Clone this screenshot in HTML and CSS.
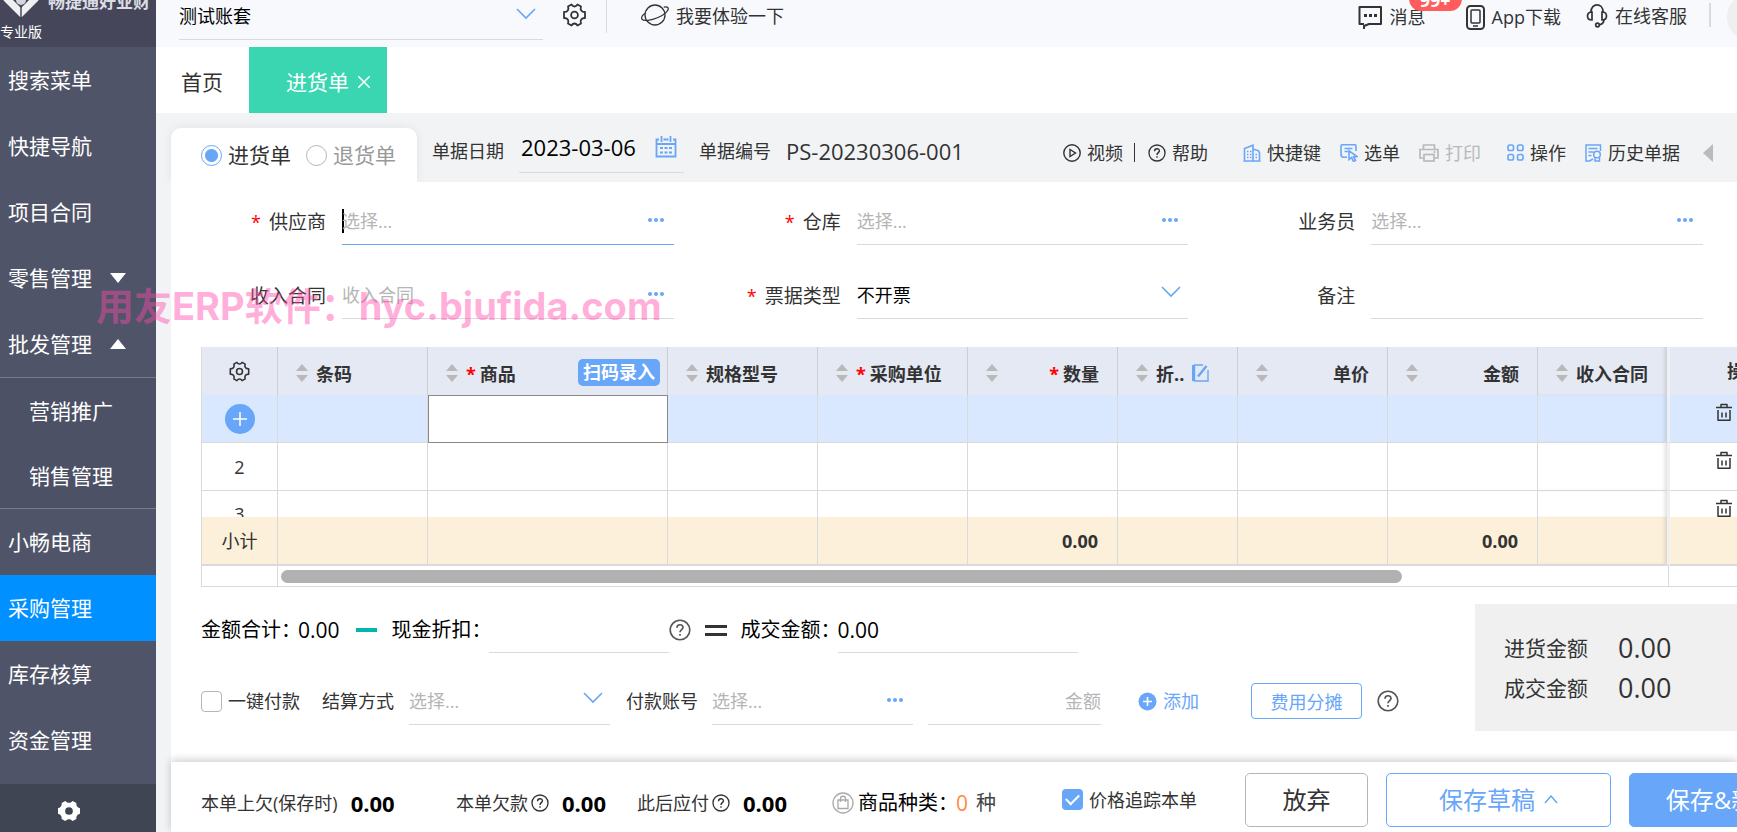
FILE: index.html
```html
<!DOCTYPE html>
<html lang="zh-CN">
<head>
<meta charset="utf-8">
<title>进货单</title>
<link rel="stylesheet" href="styles.css">
</head>
<body>
<svg class="sprite" aria-hidden="true">
  <symbol id="i-gear" viewBox="0 0 24 24"><g fill="none" stroke="currentColor" stroke-width="1.8" stroke-linejoin="round"><path d="M9 1.5c1 1.6 1.600 2 3 2s2-.4 3-2l3.500 2c-.7 1.800-.5 2.800.2 3.900s1.500 1.600 3.800 1.600v6c-2.300 0-3.100.5-3.800 1.600s-.9 2.100-.2 3.900l-3.500 2c-1-1.600-1.600-2-3-2s-2 .4-3 2l-3.500-2c.7-1.800.5-2.800-.2-3.900S3.800 15 1.500 15V9c2.300 0 3.100-.5 3.800-1.600s.9-2.100.2-3.900z"/><circle cx="12" cy="12" r="3.400"/></g></symbol>
  <symbol id="i-down" viewBox="0 0 20 12"><path d="M1 1l9 9 9-9" fill="none" stroke="currentColor" stroke-width="1.600"/></symbol>
  <symbol id="i-dots" viewBox="0 0 16 4"><g fill="currentColor"><circle cx="2" cy="2" r="2"/><circle cx="8" cy="2" r="2"/><circle cx="14" cy="2" r="2"/></g></symbol>
  <symbol id="i-help" viewBox="0 0 22 22"><circle cx="11" cy="11" r="9.800" fill="none" stroke="currentColor" stroke-width="1.600"/><path d="M8 8.800c0-4 6-4 6-.5 0 2.200-3 2.400-3 5M11 15v1.800" fill="none" stroke="currentColor" stroke-width="1.700"/></symbol>
  <symbol id="i-sort" viewBox="0 0 12 18"><path d="M0 7l6-7 6 7zM0 11h12l-6 7z" fill="#b9b9b9"/></symbol>
  <symbol id="i-trash" viewBox="0 0 16 18"><path d="M0 4.500h16M5 4V1.500h6V4M2 7v10.200h12V7M6 9.500v5M10 9.500v5" fill="none" stroke="currentColor" stroke-width="1.500" stroke-linejoin="round"/></symbol>
</svg>
<div class="app">
  <nav class="side">
    <div class="brand">
      <div class="brand-row">
        <svg class="brand-logo" viewBox="0 0 36 30"><path d="M3 11l15 15 15-15" fill="none" stroke="#f0f0f2" stroke-width="7"/><path d="M18 18v12" stroke="#45465a" stroke-width="1.500"/><circle cx="18" cy="13" r="5" fill="#d5d5da"/></svg>
        <span>畅捷通好业财</span>
      </div>
      <small>专业版</small>
    </div>
    <a href="#">搜索菜单</a>
    <a href="#">快捷导航</a>
    <a href="#">项目合同</a>
    <a href="#">零售管理<svg class="tri" viewBox="0 0 16 10"><path d="M0 0h16l-8 10z" fill="#fff"/></svg></a>
    <a href="#">批发管理<svg class="tri" viewBox="0 0 16 10"><path d="M0 10h16l-8-10z" fill="#fff"/></svg></a>
    <div class="sub"><a href="#">营销推广</a><a href="#">销售管理</a></div>
    <a href="#">小畅电商</a>
    <a href="#" class="on">采购管理</a>
    <a href="#">库存核算</a>
    <a href="#">资金管理</a>
    <button class="side-foot" aria-label="设置"><svg width="22" height="22" viewBox="0 0 24 24"><path fill="#fff" fill-rule="evenodd" d="M8 1c1.500 1.500 2.500 2 4 2s2.500-.5 4-2l4 2.300c-.3 3 .7 4.700 4 5.700v6c-3.300 1-4.300 2.700-4 5.700L16 23c-1.500-1.500-2.500-2-4-2s-2.500.5-4 2l-4-2.300c.3-3-.7-4.700-4-5.700V9c3.300-1 4.300-2.700 4-5.700zm4 6.800a4.200 4.200 0 100 8.400 4.200 4.200 0 000-8.400z"/></svg></button>
  </nav>

  <main class="main">
    <header class="top">
      <div class="field account">
        <select aria-label="账套"><option>测试账套</option></select>
        <svg class="chev" width="20" height="12"><use href="#i-down"/></svg>
      </div>
      <button class="plain top-gear" aria-label="设置"><svg width="25" height="24"><use href="#i-gear"/></svg></button>
      <i class="bar"></i>
      <a href="#" class="try"><svg width="28" height="24" viewBox="0 0 28 24" fill="none" stroke="currentColor" stroke-width="1.300"><circle cx="14" cy="11" r="10"/><path d="M4.500 9C1.500 11 0 13.500 1 15.200c1.500 2.300 9 1.300 16-1.700s11.500-7.500 10-9.700c-.6-.9-2.300-1-4.300-.6"/></svg>我要体验一下</a>
      <div class="top-right">
        <a href="#" class="msg"><svg width="25" height="25" viewBox="0 0 25 25" fill="none" stroke="currentColor" stroke-width="2"><path d="M6 24v-3l5-2h12V2H1.500v17H6" stroke-linejoin="round"/><path d="M6 10.500h3M11 10.500h3M16 10.500h3" stroke-width="3"/></svg>消息<b class="badge">99+</b></a>
        <a href="#" class="dl"><svg width="19" height="25" viewBox="0 0 19 25" fill="none" stroke="currentColor" stroke-width="2"><rect x="1" y="1" width="17" height="23" rx="3.500"/><rect x="5" y="5" width="9" height="13" rx="1" stroke-width="1.500"/><path d="M7 21h5" stroke-width="1.500"/></svg>App下载</a>
        <a href="#" class="svc"><svg width="22" height="24" viewBox="0 0 22 24" fill="none" stroke="currentColor" stroke-width="1.700"><path d="M5 8C5-1.500 17-1.500 17 8M18 15c0 3-2 5.500-5 6"/><path d="M6 8c-6 0-6 8 0 8zM16 8c6 0 6 8 0 8z"/><circle cx="11.500" cy="21" r="1.800"/></svg>在线客服</a>
        <i class="bar short"></i>
        <span class="avatar"></span>
      </div>
    </header>

    <div class="tabs">
      <a href="#" class="tab">首页</a>
      <a href="#" class="tab cur">进货单<svg width="12" height="12" viewBox="0 0 12 12"><path d="M0 0l12 12M12 0L0 12" stroke="#fff" stroke-width="1.500"/></svg></a>
    </div>

    <div class="body">
      <div class="head">
        <div class="kind">
          <label><input type="radio" name="kind" checked>进货单</label>
          <label class="off"><input type="radio" name="kind">退货单</label>
        </div>
        <div class="docinfo">
          <label for="date">单据日期</label>
          <div class="field date">
            <input id="date" value="2023-03-06">
            <svg width="22" height="22" viewBox="0 0 22 22" fill="none" stroke="currentColor"><path d="M4 3.500H1.500v17h19v-17H18M8.500 3.500h5M1 8h20" stroke-width="1.800"/><path d="M6.500 0v6M15.500 0v6" stroke-width="1.800"/><path d="M5 12h3M9.500 12h3M14 12h3M5 16.500h3M9.500 16.500h3M14 16.500h3" stroke-width="1.800"/></svg>
          </div>
          <span class="no-label">单据编号</span>
          <span class="no">PS-20230306-001</span>
        </div>
        <div class="tools">
          <a href="#"><svg width="18" height="18" viewBox="0 0 18 18" fill="none" stroke="currentColor" stroke-width="1.400"><circle cx="9" cy="9" r="8.200"/><path d="M7 5.500v7L12.500 9z"/></svg>视频</a>
          <i class="vsep"></i>
          <a href="#"><svg width="18" height="18"><use href="#i-help"/></svg>帮助</a>
          <a href="#" class="wide"><svg class="blue" width="18" height="18" viewBox="0 0 18 18" fill="none" stroke="currentColor" stroke-width="1.600"><path d="M1.500 17V4.500L10 1.200V17M10 5l5.500 1.800L16.500 9v8M4 7.500h1.500M7 7.500h1.500M4 10.500h1.500M7 10.500h1.500M4 13.500h1.500M7 13.500h1.500M12.500 10.500H14M12.500 13.500H14M.5 17h17"/></svg>快捷键</a>
          <a href="#"><svg class="blue" width="18" height="18" viewBox="0 0 18 18" fill="none" stroke="currentColor" stroke-width="1.600"><path d="M16 7V2c0-.7-.4-1.200-1-1.200H2.200c-.7 0-1.200.5-1.200 1.200v8c0 2 1 3.200 2.500 3.200H7M4.500 4.500h8M4.500 7.500H8"/><path d="M9 6.800v8.700l2.500-2 2 4 2-1-2-3.500 3.500-.5z"/></svg>选单</a>
          <a href="#" class="dis"><svg width="20" height="18" viewBox="0 0 20 18" fill="none" stroke="currentColor" stroke-width="1.700"><path d="M4.500 5V1h11v4M4.500 14H1V5.500h18V14h-3.500"/><rect x="5" y="10.500" width="10" height="6.500"/><path d="M14.500 8h2"/></svg>打印</a>
          <a href="#" class="wide2"><svg class="blue" width="17" height="17" viewBox="0 0 17 17" fill="none" stroke="currentColor" stroke-width="1.600"><rect x="1" y="1" width="5.500" height="5.500" rx="1.800"/><rect x="10.500" y="1" width="5.500" height="5.500" rx="1.800"/><rect x="1" y="10.500" width="5.500" height="5.500" rx="1.800"/><rect x="10.500" y="10.500" width="5.500" height="5.500" rx="1.800"/></svg>操作</a>
          <a href="#"><svg class="blue" width="17" height="18" viewBox="0 0 17 18" fill="none" stroke="currentColor" stroke-width="1.500"><path d="M15.500 7V1H1v16h3.500L8 15M3.500 4.500h9M3.500 8h5M3.500 11.500h3"/><circle cx="12" cy="10.500" r="3.300"/><path d="M10 13.500V17h4.500v-3.500"/></svg>历史单据</a>
          <svg class="fold" width="10" height="18" viewBox="0 0 10 18"><path d="M10 0v18L0 9z" fill="#bbb"/></svg>
        </div>
      </div>

      <div class="card">
        <form class="form">
          <div class="item"><label for="f1"><em>*</em>供应商</label><div class="field focus"><span class="caret"></span><input id="f1" placeholder="选择..."><svg class="dots" width="16" height="4"><use href="#i-dots"/></svg></div></div>
          <div class="item"><label for="f2"><em>*</em>仓库</label><div class="field"><input id="f2" placeholder="选择..."><svg class="dots" width="16" height="4"><use href="#i-dots"/></svg></div></div>
          <div class="item"><label for="f3">业务员</label><div class="field"><input id="f3" placeholder="选择..."><svg class="dots" width="16" height="4"><use href="#i-dots"/></svg></div></div>
          <div class="item"><label for="f4">收入合同</label><div class="field"><input id="f4" placeholder="收入合同"><svg class="dots" width="16" height="4"><use href="#i-dots"/></svg></div></div>
          <div class="item"><label for="f5"><em>*</em>票据类型</label><div class="field"><select id="f5"><option>不开票</option></select><svg class="chev" width="20" height="12"><use href="#i-down"/></svg></div></div>
          <div class="item"><label for="f6">备注</label><div class="field"><input id="f6"></div></div>
        </form>

        <div class="grid">
          <table>
            <colgroup><col class="c-no"><col class="c-m"><col class="c-l"><col class="c-m"><col class="c-m"><col class="c-m"><col class="c-s"><col class="c-m"><col class="c-m"><col class="c-x"><col class="c-op"></colgroup>
            <thead><tr>
              <th class="mid"><svg class="dark" width="21" height="21"><use href="#i-gear"/></svg></th>
              <th><div><svg width="12" height="18"><use href="#i-sort"/></svg><span>条码</span></div></th>
              <th><div><svg width="12" height="18"><use href="#i-sort"/></svg><span><em>*</em>商品</span><button class="scan">扫码录入</button></div></th>
              <th><div><svg width="12" height="18"><use href="#i-sort"/></svg><span>规格型号</span></div></th>
              <th><div><svg width="12" height="18"><use href="#i-sort"/></svg><span><em>*</em>采购单位</span></div></th>
              <th><div><svg width="12" height="18"><use href="#i-sort"/></svg><span class="r"><em>*</em>数量</span></div></th>
              <th><div><svg width="12" height="18"><use href="#i-sort"/></svg><span>折..</span><svg class="blue" width="17" height="18" viewBox="0 0 17 18" fill="none" stroke="currentColor"><path d="M11 1H2.500v16H16V6" stroke-width="1.400"/><path d="M1 1v16" stroke-width="2"/><path d="M6 12.500L14.500 2" stroke-width="2.400"/></svg></div></th>
              <th><div><svg width="12" height="18"><use href="#i-sort"/></svg><span class="r">单价</span></div></th>
              <th><div><svg width="12" height="18"><use href="#i-sort"/></svg><span class="r">金额</span></div></th>
              <th><div><svg width="12" height="18"><use href="#i-sort"/></svg><span>收入合同</span></div></th>
              <th class="op mid">操作</th>
            </tr></thead>
            <tbody>
              <tr class="sel"><td class="mid"><button class="plus" aria-label="新增行"><svg width="14" height="14" viewBox="0 0 14 14"><path d="M7 0v14M0 7h14" stroke="#fff" stroke-width="1.500"/></svg></button></td><td></td><td class="edit"></td><td></td><td></td><td></td><td></td><td></td><td></td><td></td><td class="op"><svg class="dark" width="16" height="18"><use href="#i-trash"/></svg></td></tr>
              <tr><td class="mid">2</td><td></td><td></td><td></td><td></td><td></td><td></td><td></td><td></td><td></td><td class="op"><svg class="dark" width="16" height="18"><use href="#i-trash"/></svg></td></tr>
              <tr class="cut"><td class="mid"><div>3</div></td><td></td><td></td><td></td><td></td><td></td><td></td><td></td><td></td><td></td><td class="op"><svg class="dark" width="16" height="18"><use href="#i-trash"/></svg></td></tr>
            </tbody>
            <tfoot>
              <tr><td class="mid">小计</td><td></td><td></td><td></td><td></td><td class="num">0.00</td><td></td><td></td><td class="num">0.00</td><td></td><td class="op"></td></tr>
            </tfoot>
          </table>
          <div class="scroll"><span></span><div class="track"><i></i></div><span class="end"></span></div>
        </div>

        <div class="summary">
          <div class="lines">
            <div class="line big">
              <span>金额合计：</span><span class="val">0.00</span><i class="minus"></i><label for="disc">现金折扣：</label>
              <div class="field f-disc"><input id="disc"></div>
              <svg class="gray" width="22" height="22"><use href="#i-help"/></svg><i class="equal"></i>
              <label for="deal">成交金额：</label><div class="field f-deal"><input id="deal" value="0.00"></div>
            </div>
            <div class="line">
              <label class="ck"><input type="checkbox">一键付款</label>
              <label class="l-way" for="way">结算方式</label><div class="field f-way"><select id="way" class="ph"><option>选择...</option></select><svg class="chev" width="20" height="12"><use href="#i-down"/></svg></div>
              <label class="l-acc" for="acc">付款账号</label><div class="field f-acc"><input id="acc" placeholder="选择..."><svg class="dots" width="16" height="4"><use href="#i-dots"/></svg></div>
              <div class="field f-amt"><input aria-label="金额" placeholder="金额"></div>
              <a href="#" class="add"><svg width="19" height="19" viewBox="0 0 19 19"><circle cx="9.500" cy="9.500" r="9" fill="#67a6f8"/><path d="M9.500 5v9M5 9.500h9" stroke="#fff" stroke-width="1.600"/></svg>添加</a>
              <button class="share">费用分摊</button>
              <svg class="gray" width="22" height="22"><use href="#i-help"/></svg>
            </div>
          </div>
          <dl class="panel">
            <div><dt>进货金额</dt><dd>0.00</dd></div>
            <div><dt>成交金额</dt><dd>0.00</dd></div>
          </dl>
        </div>

        <footer class="foot">
          <span class="st s1">本单上欠(保存时)<b>0.00</b></span>
          <span class="st s2">本单欠款<svg width="18" height="18"><use href="#i-help"/></svg><b>0.00</b></span>
          <span class="st s3">此后应付<svg width="18" height="18"><use href="#i-help"/></svg><b>0.00</b></span>
          <span class="kinds"><svg width="22" height="22" viewBox="0 0 22 22" fill="none" stroke="#aaa" stroke-width="1.300"><circle cx="11" cy="11" r="10"/><path d="M6 8h10v8.500H6zM8.500 10V6.500c0-3 5-3 5 0V10"/></svg>商品种类：<strong>0</strong><span>种</span></span>
          <label class="ck trace"><input type="checkbox" checked>价格追踪本单</label>
          <button class="btn giveup">放弃</button>
          <button class="btn draft">保存草稿<svg width="14" height="9" viewBox="0 0 14 9"><path d="M1 8l6-7 6 7" fill="none" stroke="currentColor" stroke-width="1.500"/></svg></button>
          <button class="btn save">保存&amp;新增</button>
        </footer>
      </div>
    </div>
  </main>
  <div class="mark">用友ERP软件：hyc.bjufida.com</div>
</div>
</body>
</html>
```

FILE: styles.css
```css
* { box-sizing: border-box; }
body { margin: 0; overflow: hidden; background: #f2f3f5; color: #333; font: 18px/24px "Open Sans", "Noto Sans CJK SC", sans-serif; }
a { color: inherit; text-decoration: none; }
svg { flex: none; display: block; }
button, input, select { font: inherit; color: inherit; }
button { cursor: pointer; white-space: nowrap; }
em { color: #f00; font-style: normal; }
label { white-space: nowrap; }
.sprite { position: absolute; width: 0; height: 0; }
.app { display: flex; height: 100vh; position: relative; overflow: hidden; }
.blue { color: #67a6f8; }
.dark { color: #333; }
.gray { color: #555; }

.side { flex: 0 0 156px; display: flex; flex-direction: column; background: #505468; color: #fff; font-size: 21px; }
.side a { display: flex; align-items: center; height: 66px; padding-left: 8px; flex: none; }
.brand { flex: none; height: 47px; background: #45465a; overflow: hidden; }
.brand-row { display: flex; align-items: center; gap: 9px; height: 24px; margin: -10px 0 8px 3px; font-size: 17px; font-weight: bold; color: #dcdce2; white-space: nowrap; }
.brand-logo { width: 36px; height: 30px; }
.brand small { display: block; font-size: 14px; line-height: 20px; }
.tri { width: 16px; height: 10px; margin-left: 18px; }
.sub { border: solid #777a8a; border-width: 1px 0; background: #4d5165; flex: none; }
.side .sub a { height: 65px; padding-left: 29px; }
.side a.on { background: #0090ff; }
.side-foot { margin-top: auto; height: 48px; flex: none; border: 0; background: #404553; display: flex; align-items: center; justify-content: center; padding: 6px 18px 0 0; }

.main { flex: 1; min-width: 0; display: flex; flex-direction: column; }
.field { display: flex; align-items: center; border-bottom: 1px solid #d9dadc; height: 48px; min-width: 0; }
.field input, .field select { flex: 1; min-width: 0; width: 100%; border: 0; padding: 0; background: none; outline: 0; appearance: none; height: 28px; }
.field select { color: #000; margin-right: -20px; }
.field select.ph { color: #b5b5b5; }
.field input::placeholder { color: #b5b5b5; opacity: 1; }
.chev { color: #67a6f8; pointer-events: none; margin: 0 7px 6px 0; }
.dots { color: #67a6f8; margin: 0 10px 2px 0; }
.plain { border: 0; background: none; padding: 0; }

.top { height: 47px; flex: none; background: #f7f9fd; display: flex; align-items: flex-start; padding-left: 23px; }
.account { width: 364px; height: 40px; padding-bottom: 7px; }
.account .chev { margin-bottom: 4px; }
.top-gear { margin: 3px 19px 0 19px; }
.bar { width: 1px; height: 33px; background: #d9dadc; }
.try { display: flex; align-items: center; gap: 7px; margin: 2px 0 0 34px; height: 28px; }
.top-right { margin-left: auto; display: flex; align-items: center; height: 34px; }
.top-right a { display: flex; align-items: center; gap: 7px; white-space: nowrap; }
.msg { position: relative; }
.badge { position: absolute; left: 51px; top: -18px; width: 53px; height: 24px; border-radius: 12px; background: #ff5d5d; color: #fff; text-align: center; font-size: 18px; line-height: 26px; }
.dl { margin-left: 40px; }
.svc { margin-left: 25px; }
.top-right .svc { padding-bottom: 2px; }
.bar.short { height: 24px; width: 2px; margin: 0 16px 4px 22px; }
.avatar { width: 48px; height: 48px; border-radius: 50%; background: #efefef; margin-right: -38px; }

.tabs { height: 66px; flex: none; background: #fff; display: flex; font-size: 21px; }
.tab { display: flex; align-items: center; padding: 4px 26px 0 25px; }
.tab.cur { background: #3ad6b2; color: #fff; gap: 9px; padding: 4px 17px 0 37px; }

.body { flex: 1; display: flex; flex-direction: column; padding: 15px 0 0 15px; min-height: 0; }
.head { height: 54px; flex: none; display: flex; align-items: center; }
.kind { display: flex; align-items: center; gap: 15px; height: 54px; padding: 0 21px 0 30px; background: #fff; border-radius: 10px 10px 0 0; font-size: 21px; box-shadow: 0 0 8px #e2e3e6; clip-path: inset(-10px -10px 0 -10px); }
.kind label { display: flex; align-items: center; gap: 6px; }
.kind .off { color: #999; }
.kind input { appearance: none; width: 21px; height: 21px; margin: 0; border: 1px solid #b5b5b5; border-radius: 50%; background: #fff; }
.kind input:checked { border-color: #67a6f8; background: radial-gradient(#67a6f8 0 6px, #fff 7px); }
.docinfo { display: flex; align-items: center; padding: 0 0 9px 15px; white-space: nowrap; }
.date { width: 165px; height: 44px; margin: 0 15px; padding: 0 7px 6px 2px; color: #67a6f8; font-size: 22px; }
.date input { color: #000; height: 32px; }
.no { margin-left: 15px; font-size: 22px; }
.tools { display: flex; align-items: center; margin-left: auto; padding: 0 24px 5px 0; white-space: nowrap; }
.tools a { display: flex; align-items: center; gap: 6px; margin-left: 19px; }
.tools .vsep { width: 1px; height: 19px; background: #333; margin: 0 -6px 0 11px; }
.tools .wide { margin-left: 35px; }
.tools .wide2 { margin-left: 26px; }
.tools .dis { color: #b9b9b9; }
.fold { margin-left: 23px; }

.card { flex: 1; background: #fff; display: flex; flex-direction: column; min-height: 0; }
.form { display: grid; grid-template-columns: repeat(3, 1fr); gap: 26px 12px; padding: 15px 34px 28px 0; }
.item { display: grid; grid-template-columns: 155px 1fr; column-gap: 16px; align-items: center; }
.item label { text-align: right; font-size: 19px; padding-top: 2px; }
.item label em { margin-right: 8px; font-size: 18px; }
.focus { border-color: #67a6f8; }
.caret { width: 2px; height: 24px; background: #000; margin-right: -2px; }

.grid { margin-left: 30px; border-left: 1px solid #d9dadb; overflow: hidden; flex: none; }
table { border-collapse: separate; border-spacing: 0; table-layout: fixed; width: 1619px; }
.c-no { width: 76px; } .c-m { width: 150px; } .c-l { width: 240px; } .c-s { width: 120px; } .c-x { width: 132px; } .c-op { width: 151px; }
th, td { padding: 0; height: 48px; border-right: 1px solid #d9dadb; border-bottom: 1px solid #d9dadb; text-align: left; }
th { background: #e5e9f4; border-color: #ccced2; border-bottom: 0; }
th > div { display: flex; align-items: center; gap: 8px; padding: 3px 18px 0; white-space: nowrap; }
th > div > span { padding-top: 2px; }
th em { margin-right: 4px; }
th .r { margin-left: auto; }
.scan { margin: 0 -11px 0 auto; height: 27px; padding: 0 5px; border: 0; border-radius: 5px; background: #67a6f8; color: #fff; line-height: 27px; }
.mid { text-align: center; }
.mid svg { margin: 0 auto; }
.sel td { background: #d9e8ff; }
.sel td.edit { background: #fff; border: 1px solid #888; }
.plus { width: 30px; height: 30px; border: 0; border-radius: 50%; padding: 8px; background: #67a6f8; vertical-align: middle; }
.cut td { height: 26px; border-bottom: 0; vertical-align: top; }
.cut div { height: 26px; line-height: 46px; overflow: hidden; }
td.op { vertical-align: top; padding: 8px 0 0 46px; }
th:nth-last-child(2), td:nth-last-child(2) { border-right: 3px solid #eef0f4; box-shadow: inset -4px 0 4px -2px #0002; }
tfoot td { background: #fdf0da; border-bottom-width: 2px; height: 49px; }
.num { text-align: right; padding-right: 19px; font-weight: bold; }
.scroll { display: grid; grid-template-columns: 76px 1fr 68px; height: 21px; border-bottom: 1px solid #d9dadb; }
.scroll span { border-right: 1px solid #d9dadb; }
.scroll .end { border-right: 0; }
.track { padding: 4px 3px; border-right: 1px solid #d9dadb; }
.track i { display: block; width: 81%; height: 13px; border-radius: 7px; background: #b1b1b1; }

.summary { display: flex; justify-content: space-between; align-items: flex-start; padding-left: 30px; margin-top: 17px; }
.lines { padding-top: 3px; }
.line { display: flex; align-items: center; height: 48px; white-space: nowrap; }
.big { height: 46px; margin-bottom: 24px; font-size: 20px; color: #000; }
.big .field { height: 46px; }
.big .val, .f-deal { font-size: 21px; }
.big > span:first-child { width: 97px; }
.big > label { width: 97px; }
.minus { width: 21px; height: 4px; margin: 0 15px 0 16px; background: #00b5ad; }
.f-disc { width: 180px; }
.equal { width: 22px; height: 11px; margin: 0 14px 0 14px; border: solid #333; border-width: 3px 0; }
.f-deal { width: 240px; }
.ck { display: flex; align-items: center; gap: 6px; }
.ck input { appearance: none; width: 21px; height: 21px; margin: 0; border: 1px solid #b5b5b5; border-radius: 4px; background: #fff; display: grid; place-items: center; }
.ck input:checked { border: 0; background: #67a6f8; }
.ck input:checked::after { content: ""; width: 11px; height: 6px; border: solid #fff; border-width: 0 0 2px 2px; transform: rotate(-45deg); margin-bottom: 4px; }
.l-way { margin: 0 15px 0 22px; }
.l-acc { margin: 0 14px 0 16px; }
.f-way, .f-acc { width: 201px; }
.f-amt { width: 173px; margin-left: 15px; }
.f-amt input { text-align: right; }
.add { display: flex; align-items: center; gap: 6px; margin-left: 37px; color: #67a6f8; }
.share { width: 111px; height: 36px; margin: 0 15px 0 52px; padding: 2px 0 0; border: 1px solid #67a6f8; border-radius: 4px; background: #fff; color: #67a6f8; }
.panel { margin: 0; width: 262px; height: 127px; padding: 24px 0 0 29px; background: #f0f0f0; }
.panel div { display: flex; align-items: center; height: 40px; }
.panel dt { width: 114px; font-size: 21px; }
.panel dd { margin: 0; font-size: 27px; }

.foot { margin-top: auto; flex: none; height: 70px; display: flex; align-items: center; padding: 5px 0 0 30px; box-shadow: 0 -2px 8px #0003; background: #fff; white-space: nowrap; overflow: hidden; clip-path: inset(-10px 0 0 -10px); }
.st { display: flex; align-items: center; gap: 3px; padding-top: 6px; flex: none; }
.st b { color: #000; font-size: 22px; margin-left: 10px; }
.s1 { width: 255px; }
.s2 { width: 181px; }
.s3 { width: 195px; }
.kinds { display: flex; align-items: center; flex: none; width: 230px; gap: 4px; padding-top: 6px; font-size: 20px; color: #000; }
.kinds strong { font-weight: normal; color: #ff8b45; font-size: 21px; margin-right: 4px; margin-left: -6px; }
.kinds > span { color: #444; }
.trace { flex: none; width: 183px; }
.btn { flex: none; height: 54px; padding: 0; border-radius: 5px; font-size: 24px; border: 1px solid #67a6f8; background: #fff; color: #67a6f8; }
.giveup { width: 123px; border-color: #b5b5b5; color: #333; margin-right: 18px; }
.draft { width: 225px; margin-right: 18px; display: flex; align-items: center; justify-content: center; gap: 9px; }
.save { width: 187px; background: #67a6f8; color: #fff; }

.mark { position: absolute; left: 96px; top: 282px; font: bold 38px/48px Inter, "Noto Sans CJK SC", sans-serif; color: #ff49a970; white-space: nowrap; pointer-events: none; }
```
